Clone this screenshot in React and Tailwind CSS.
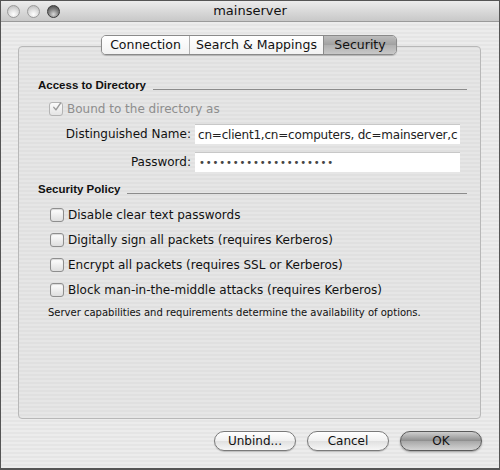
import React from "react";

const font = { fontFamily: '"DejaVu Sans", "Lucida Grande", Verdana, sans-serif' };
const headFont = { fontFamily: '"Liberation Sans", Arial, sans-serif' };

function Light({ dark }) {
  return (
    <div
      className={
        "w-[13px] h-[13px] rounded-full border " +
        (dark
          ? "border-[#3a3a3a] bg-[radial-gradient(circle_at_50%_75%,#d8d8d8_0%,#8a8a8a_45%,#3c3c3c_100%)]"
          : "border-[#9a9a9a] bg-[radial-gradient(circle_at_50%_75%,#ffffff_0%,#e0e0e0_45%,#b4b4b4_100%)]")
      }
    />
  );
}

function CheckBox({ checked, disabled }) {
  return (
    <div
      className={
        "w-[14px] h-[14px] rounded-[3px] border flex items-center justify-center shrink-0 " +
        (disabled
          ? "border-[#b4b4b4] bg-[linear-gradient(#fbfbfb,#e4e4e4)]"
          : "border-[#8e8e8e] bg-[linear-gradient(#ffffff,#dedede)] shadow-[inset_0_1px_1px_rgba(0,0,0,0.15)]")
      }
    >
      {checked && (
        <svg width="14" height="14" viewBox="0 0 14 14" className="-mt-[3px] ml-[2px]">
          <path d="M2.5 7.5 L5.5 11 L12 1.5" fill="none" stroke="#9a9a9a" strokeWidth="2" strokeLinecap="round" strokeLinejoin="round" />
        </svg>
      )}
    </div>
  );
}

function Section({ title }) {
  return (
    <div className="flex items-center pr-[13px]">
      <span style={headFont} className="text-[11.5px] font-bold text-[#111] leading-[14px]">{title}</span>
      <div className="flex-1 border-t border-[#8c8c8c] ml-[7px] mt-[8px]" />
    </div>
  );
}

function Option({ label }) {
  return (
    <div className="flex items-center h-[25px] pl-[30px]">
      <CheckBox />
      <span className="ml-[4px] text-[12px] text-[#111]">{label}</span>
    </div>
  );
}

function Btn({ children, def }) {
  return (
    <div
      className={
        "w-[82px] h-[20px] rounded-full border flex items-center justify-center text-[12px] text-[#111] " +
        (def
          ? "border-[#5a5a5a] bg-[linear-gradient(#cfcfcf,#8c8c8c_50%,#a8a8a8_51%,#d4d4d4)] shadow-[0_1px_2px_rgba(0,0,0,0.35)]"
          : "border-[#7a7a7a] bg-[linear-gradient(#ffffff,#f0f0f0_50%,#e0e0e0_51%,#f6f6f6)] shadow-[0_1px_1px_rgba(0,0,0,0.2)]")
      }
    >
      {children}
    </div>
  );
}

export default function App() {
  return (
    <div
      style={font}
      className="w-[500px] h-[470px] border border-[#555] border-b-2 flex flex-col bg-[repeating-linear-gradient(0deg,#ececec_0px,#ececec_2px,#e5e5e5_2px,#e5e5e5_4px)] overflow-hidden"
    >
      {/* Title bar */}
      <div className="h-[21px] shrink-0 grid grid-cols-[1fr_auto_1fr] items-center border-b border-[#9a9a9a] bg-[linear-gradient(#ececec,#d6d6d6_60%,#c8c8c8)]">
        <div className="flex items-center gap-[7px] pl-[6px]">
          <Light />
          <Light />
          <Light dark />
        </div>
        <div className="text-[13px] text-[#111]">mainserver</div>
        <div />
      </div>

      {/* Tabs */}
      <div className="flex justify-center mt-[13px] -mb-[9px] relative z-10">
        <div className="flex h-[20px] rounded-[5px] border border-[#8a8a8a] shadow-[0_1px_1px_rgba(0,0,0,0.2)] overflow-hidden text-[12.5px] text-[#111] ml-[-2px]">
          <div className="w-[88px] flex items-center justify-center bg-[linear-gradient(#ffffff,#f2f2f2)] border-r border-[#b0b0b0]">Connection</div>
          <div className="w-[134px] flex items-center justify-center bg-[linear-gradient(#ffffff,#f2f2f2)] border-r border-[#8a8a8a]">Search &amp; Mappings</div>
          <div className="w-[72px] flex items-center justify-center bg-[linear-gradient(#bdbdbd,#a0a0a0_50%,#b0b0b0_51%,#c8c8c8)]">Security</div>
        </div>
      </div>

      {/* Panel */}
      <div className="ml-[17px] mr-[18px] h-[373px] shrink-0 rounded-[4px] border border-[#b8b8b8] bg-[repeating-linear-gradient(0deg,#e6e6e6_0px,#e6e6e6_2px,#e0e0e0_2px,#e0e0e0_4px)] pl-[19px] pt-[31px]">
        <Section title="Access to Directory" />
        <div className="flex items-center h-[25px] mt-[4px] pl-[11px]">
          <CheckBox checked disabled />
          <span className="ml-[4px] text-[12px] text-[#8e8e8e]">Bound to the directory as</span>
        </div>
        <div className="flex items-center mt-[3px] -ml-[19px]">
          <div className="w-[172px] text-right text-[12px] text-[#111]">Distinguished Name:</div>
          <div className="ml-[4px] w-[265px] h-[20px] bg-white border-t border-[#c8c8c8] flex items-center pl-[3px] whitespace-nowrap text-[12px] tracking-[-0.2px] text-[#222]">
            cn=client1,cn=computers, dc=mainserver,c
          </div>
        </div>
        <div className="flex items-center mt-[8px] -ml-[19px]">
          <div className="w-[172px] text-right text-[12px] text-[#111]">Password:</div>
          <div className="ml-[4px] w-[265px] h-[20px] bg-white border-t border-[#c8c8c8] flex items-center pl-[4px] overflow-hidden whitespace-nowrap text-[10px] tracking-[0.85px] text-[#444]">
            ••••••••••••••••••••
          </div>
        </div>
        <div className="mt-[10px]">
          <Section title="Security Policy" />
        </div>
        <div className="mt-[6px] -ml-[19px]">
          <div className="pl-[1px]">
            <Option label="Disable clear text passwords" />
            <Option label="Digitally sign all packets (requires Kerberos)" />
            <Option label="Encrypt all packets (requires SSL or Kerberos)" />
            <Option label="Block man-in-the-middle attacks (requires Kerberos)" />
          </div>
        </div>
        <div className="mt-[3px] ml-[10px] text-[10px] text-[#111]">
          Server capabilities and requirements determine the availability of options.
        </div>
      </div>

      {/* Buttons */}
      <div className="flex justify-end gap-[11px] pr-[17px] mt-[12px]">
        <Btn>Unbind...</Btn>
        <Btn>Cancel</Btn>
        <Btn def>OK</Btn>
      </div>
    </div>
  );
}
